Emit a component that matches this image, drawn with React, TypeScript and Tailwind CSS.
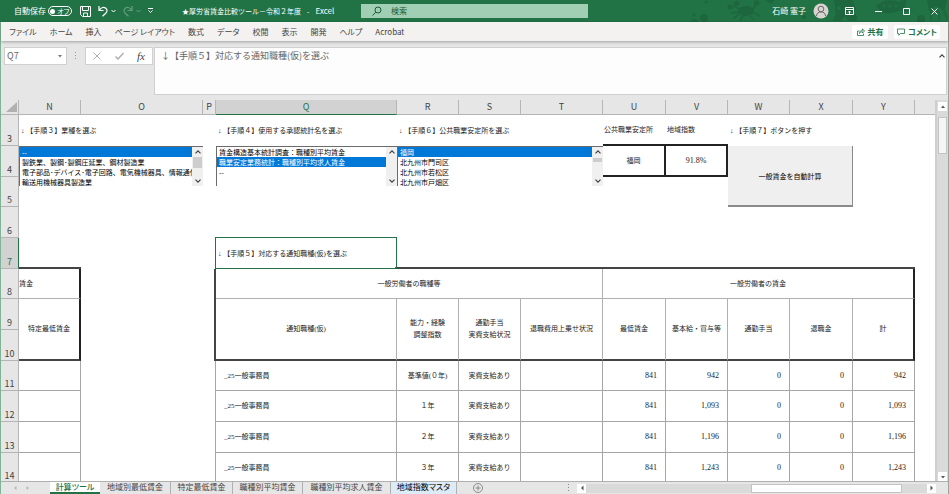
import { ReactNode } from "react";
import clsx from "clsx";

type SheetCellProps = {
  children?: ReactNode;
  className?: string;
  colSpan?: number;
  rowSpan?: number;
};

type ListBoxProps = {
  label: string;
  options: string[];
  selected: string;
  thumb?: string;
};

const columns = [
  { name: "N", width: "w-[62px]" },
  { name: "O", width: "w-[122px]" },
  { name: "P", width: "w-[13px]" },
  { name: "Q", width: "w-[181px]" },
  { name: "R", width: "w-[62px]" },
  { name: "S", width: "w-[62px]" },
  { name: "T", width: "w-[82px]" },
  { name: "U", width: "w-[63px]" },
  { name: "V", width: "w-[62px]" },
  { name: "W", width: "w-[62px]" },
  { name: "X", width: "w-[63px]" },
  { name: "Y", width: "w-[62px]" },
];

const ribbonTabs = [
  "ファイル", "ホーム", "挿入", "ページ レイアウト", "数式", "データ",
  "校閲", "表示", "開発", "ヘルプ", "Acrobat",
];

const sheetTabs = [
  { name: "計算ツール", width: "w-[50px]", active: true },
  { name: "地域別最低賃金", width: "w-[71px]" },
  { name: "特定最低賃金", width: "w-[62px]" },
  { name: "職種別平均賃金", width: "w-[70px]" },
  { name: "職種別平均求人賃金", width: "w-[88px]" },
  { name: "地域指数マスタ", width: "w-[66px]", tinted: true },
];

const wageRows = [
  { row: 11, height: "h-[30px]", years: "基準値(０年)", base: "942", total: "942" },
  { row: 12, height: "h-[31px]", years: "１年", base: "1,093", total: "1,093" },
  { row: 13, height: "h-[31px]", years: "２年", base: "1,196", total: "1,196" },
  { row: 14, height: "h-[30px]", years: "３年", base: "1,243", total: "1,243" },
];

const uiFont = "font-['Noto_Sans_CJK_JP',sans-serif]";
const sheetFont = "font-['Liberation_Serif','Noto_Sans_CJK_JP',serif]";

const Cell: React.FC<SheetCellProps> = ({ children, className, colSpan, rowSpan }) => (
  <td colSpan={colSpan} rowSpan={rowSpan} className={clsx("p-0 whitespace-nowrap", className)}>
    {children}
  </td>
);

const RowHeader = ({ row, active }: { row: number; active?: boolean }) => (
  <th
    scope="row"
    className={clsx(
      "p-0 pb-[2px] align-bottom text-center text-[9px] leading-[9px] font-normal border-r border-b",
      uiFont,
      active
        ? "bg-[#d2d2d2] text-[#217346] border-b-[#b5b5b5] border-r-[#217346]"
        : "bg-[#e6e6e6] text-[#444] border-[#b5b5b5]"
    )}
  >
    {row}
  </th>
);

const Chevron = ({ up }: { up?: boolean }) => (
  <svg viewBox="0 0 8 8" className="size-[8px]" fill="none" stroke="#404040" strokeWidth="1.2">
    <path d={up ? "M1.5 5.3 4 2.8l2.5 2.5" : "M1.5 2.7 4 5.2l2.5-2.5"} />
  </svg>
);

const Triangle = ({ d, fill = "#555" }: { d: string; fill?: string }) => (
  <svg viewBox="0 0 8 8" className="size-[8px]" fill={fill}>
    <path d={d} />
  </svg>
);

const ListBox: React.FC<ListBoxProps> = ({ label, options, selected, thumb }) => (
  <div className={clsx("flex h-[40px] border-t border-l border-[#6b6b6b] bg-white", uiFont)}>
    <select
      size={4}
      aria-label={label}
      defaultValue={selected}
      className="min-w-0 flex-1 h-[39px] overflow-hidden bg-white p-0 text-[7px] text-black outline-none [scrollbar-width:none]"
    >
      {options.map((option) => (
        <option
          key={option}
          className="h-[10px] min-h-0 overflow-hidden p-0 pl-[2px] leading-[10px] checked:bg-[linear-gradient(#0078d7,#0078d7)] checked:[-webkit-text-fill-color:white]"
        >
          {option}
        </option>
      ))}
    </select>
    <div className="flex w-[11px] flex-col items-center justify-between bg-[#f0f0f0] py-px">
      <Chevron up />
      {thumb && <div className={clsx("w-[9px] bg-[#cdcdcd]", thumb)} />}
      <div className="flex-1" />
      <Chevron />
    </div>
  </div>
);

const SeaPattern = () => (
  <svg
    viewBox="0 0 260 22"
    className="pointer-events-none absolute top-0 right-0 h-[22px] w-[260px]"
    fill="#1d663e"
    stroke="#1d663e"
    aria-hidden="true"
  >
    <g stroke="none">
      <circle cx="17" cy="2" r="1.5" />
      <circle cx="5" cy="15" r="1.5" />
      <circle cx="41" cy="7" r="2.5" />
      <circle cx="15" cy="18" r="4" />
      <circle cx="94" cy="8" r="1.5" />
      <circle cx="115" cy="17" r="2" />
      <circle cx="165" cy="17" r="3" />
      <circle cx="232" cy="19" r="4" />
      <ellipse cx="57" cy="11" rx="8" ry="5" />
      <path d="M44 3q5-5 7 1-3 4-7-1zM65 1q6-2 5 4-5 2-5-4z" />
      <path d="M145 0h18l4 9-4 5 5 7h-8l-4-5-5 5h-7l3-8z" />
      <path d="M187 6q10-9 23-4l8-3-2 7 3 6-8-2q-16 8-24-4z" />
      <path d="M238 0h20l-3 10-8-4-7 5z" />
      <path d="M77 0h9l-4 4zM1 22q4-6 9 0z" />
    </g>
    <g fill="none" strokeWidth="1.5">
      <path d="M50 9l-6-4M64 9l3-5M49 12l-7 1M50 14l-6 5M54 16l-3 5M61 16l4 4M65 13l6 3" />
      <path d="M242 8v12M248 8l3 12M254 8l4 11" />
    </g>
    <g fill="#217346" stroke="none">
      <circle cx="150" cy="8" r="2" />
      <circle cx="195" cy="6" r="1.5" />
      <circle cx="201" cy="6" r="1.5" />
      <circle cx="207" cy="6" r="1.5" />
    </g>
  </svg>
);

const TitleBar = () => (
  <header className="relative flex h-[22px] shrink-0 items-center bg-[#217346] text-[7px] leading-[10px] text-white">
    <SeaPattern />
    <div className="flex w-[182px] items-center pl-[14px]">
      <span id="autosave" className="w-[33px] text-[8px]">自動保存</span>
      <button
        role="switch"
        aria-checked="false"
        aria-labelledby="autosave"
        className="ml-px flex h-[10px] w-[24px] items-center gap-[2px] rounded-full border border-white pl-px leading-[8px] whitespace-nowrap [font-feature-settings:'palt']"
      >
        <span className="size-[5px] shrink-0 rounded-full bg-white" />
        オフ
      </button>
      <button aria-label="上書き保存" className="ml-[8px]">
        <svg viewBox="0 0 11 11" className="size-[11px]" fill="none" stroke="white">
          <path d="M.5.5h10v10h-8l-2-2zM2.5.5v4h6v-4M3.5 10.500v-3.500h4v3.500" />
        </svg>
      </button>
      <button aria-label="元に戻す" className="ml-[7px] flex items-center gap-[3px]">
        <svg viewBox="0 0 10 12" className="h-[12px] w-[10px]" fill="none" stroke="white" strokeWidth="1.200">
          <path d="M1 1v4.500h4.500M1.200 5.300C3.500 2 6 1.800 7.800 3.200c2 1.800 1.300 4-.3 5.300L4.500 11.300" />
        </svg>
        <svg viewBox="0 0 5 4" className="h-[4px] w-[5px]" fill="none" stroke="white">
          <path d="M.5 1l2 2 2-2" />
        </svg>
      </button>
      <button aria-label="やり直し" disabled className="ml-[7px] flex items-center gap-[3px] opacity-30">
        <svg viewBox="0 0 10 12" className="h-[12px] w-[10px]" fill="none" stroke="white" strokeWidth="1.200">
          <path d="M9 1v4.500H4.500M8.800 5.300C6.500 2 4 1.800 2.200 3.200c-2 1.800-1.300 4 .3 5.300L5.500 11.300" />
        </svg>
        <svg viewBox="0 0 5 4" className="h-[4px] w-[5px]" fill="none" stroke="white">
          <path d="M.5 1l2 2 2-2" />
        </svg>
      </button>
      <button aria-label="クイック アクセス ツール バーのユーザー設定" className="ml-[7px]">
        <svg viewBox="0 0 5 6" className="h-[6px] w-[5px]" fill="none" stroke="white">
          <path d="M0 .5h5M.5 2.500l2 2 2-2" />
        </svg>
      </button>
    </div>
    <h1 className="flex w-[179px] gap-[6px] whitespace-nowrap">
      <span>★厚労省賃金比較ツール－令和２年度</span>
      <span>-</span>
      <span className="text-[8px]">Excel</span>
    </h1>
    <div className="flex h-[14px] w-[227px] items-center bg-[#a0cfb3] pl-[11px] text-[#185c37]">
      <svg viewBox="0 0 10 10" className="size-[10px]" fill="none" stroke="#185c37">
        <circle cx="6" cy="4" r="3" />
        <path d="M3.800 6.200.5 9.500" />
      </svg>
      <input
        aria-label="検索"
        placeholder="検索"
        className="ml-[9px] min-w-0 flex-1 bg-transparent text-[8px] leading-[10px] outline-none placeholder:text-[#185c37]"
      />
    </div>
    <div className="relative ml-auto flex items-center pr-[11px]">
      <span className="text-[8px]">石崎 憲子</span>
      <svg viewBox="0 0 16 16" className="ml-[7px] size-[16px]" fill="none" stroke="#666">
        <circle cx="8" cy="8" r="7.500" fill="#d8d4d2" stroke="none" />
        <circle cx="8" cy="6" r="2.800" />
        <path d="M3.500 13c0-5.500 9-5.500 9 0" />
      </svg>
      <button aria-label="リボンの表示オプション" className="ml-[16px]">
        <svg viewBox="0 0 9 8" className="h-[8px] w-[9px]" fill="none" stroke="white">
          <path d="M.5.5h8v7h-8zM.5 2.500h8M4.500 7V4M3 5.500l1.500-1.500L6 5.500" />
        </svg>
      </button>
      <button aria-label="最小化" className="ml-[21px]">
        <svg viewBox="0 0 7 7" className="size-[7px]" stroke="white">
          <path d="M0 3.500h7" />
        </svg>
      </button>
      <button aria-label="最大化" className="ml-[21px]">
        <svg viewBox="0 0 7 7" className="size-[7px]" fill="none" stroke="white">
          <path d="M.5.5h6v6h-6z" />
        </svg>
      </button>
      <button aria-label="閉じる" className="ml-[21px]">
        <svg viewBox="0 0 7 7" className="size-[7px]" stroke="white">
          <path d="M.5.5l6 6M6.500.5l-6 6" />
        </svg>
      </button>
    </div>
  </header>
);

const Ribbon = () => (
  <nav className="relative flex h-[19px] shrink-0 items-center bg-[#f3f2f1] pr-[8px] pl-[8px] text-[8px] leading-[12px] text-[#444] shadow-[0_1px_3px_rgba(0,0,0,0.3)]">
    <div className="flex gap-[13px] whitespace-nowrap [font-feature-settings:'palt']">
      {ribbonTabs.map((tab) => (
        <button key={tab}>{tab}</button>
      ))}
    </div>
    <div className="ml-auto flex gap-[6px] font-bold text-[#217346]">
      <button className="flex h-[14px] w-[36px] items-center justify-center gap-[3px] rounded-xs bg-white">
        <svg viewBox="0 0 8 8" className="size-[8px]" fill="none" stroke="#217346" strokeWidth=".8">
          <path d="M2.500 3H.5v4.500h6V5.500M2.500 5.500c0-2 1-3 3-3V.8l2 2.200-2 2V3.800c-1.500 0-2.500.5-3 1.700z" />
        </svg>
        共有
      </button>
      <button className="flex h-[14px] w-[46px] items-center justify-center gap-[3px] rounded-xs bg-white [font-feature-settings:'palt']">
        <svg viewBox="0 0 8 8" className="size-[8px]" fill="none" stroke="#217346" strokeWidth=".8">
          <path d="M.5 1h7v4.500H3.500L1.800 7.300V5.500H.5z" />
        </svg>
        コメント
      </button>
    </div>
  </nav>
);

const FormulaBar = () => (
  <div className="flex shrink-0 items-start pt-[6px] pr-px pb-[5px] pl-[3px]">
    <div className="flex h-[18px] w-[63px] items-center border border-[#d0d0d0] bg-white pr-[2px]">
      <input
        aria-label="名前ボックス"
        defaultValue="Q7"
        className="min-w-0 flex-1 pl-[2px] text-[9px] leading-[12px] text-[#666] outline-none"
      />
      <button aria-label="名前の一覧">
        <Triangle d="M2 3h4L4 5.500z" fill="#777" />
      </button>
    </div>
    <svg viewBox="0 0 2 8" className="mx-[8px] mt-[5px] h-[8px] w-[2px]" fill="#999">
      <path d="M0 0h1v1H0zM0 3h1v1H0zM0 6h1v1H0z" />
    </svg>
    <div className="flex h-[18px] w-[68px] items-center justify-between border border-[#d0d0d0] bg-white px-[7px]">
      <button aria-label="キャンセル">
        <svg viewBox="0 0 8 8" className="size-[8px]" stroke="#b0b0b0">
          <path d="M.5.5l7 7M7.500.5l-7 7" />
        </svg>
      </button>
      <button aria-label="入力">
        <svg viewBox="0 0 9 8" className="h-[8px] w-[9px]" fill="none" stroke="#b0b0b0" strokeWidth="1.500">
          <path d="M.5 4.500l2.500 2.500L8.500 1" />
        </svg>
      </button>
      <button aria-label="関数の挿入" className="font-['Liberation_Serif',serif] text-[11px] leading-[12px] text-[#444] italic">
        fx
      </button>
    </div>
    <div className="ml-px flex h-[48px] flex-1 items-start border border-[#d0d0d0] bg-[#fdfdfd]">
      <textarea
        aria-label="数式バー"
        defaultValue="↓【手順５】対応する通知職種(仮)を選ぶ"
        className="h-[44px] min-w-0 flex-1 resize-none overflow-hidden bg-transparent pt-[2px] pl-[6px] text-[9px] leading-[12px] text-[#666] outline-none"
      />
      <button aria-label="数式バーの折りたたみ" className="mt-[4px]">
        <Chevron up />
      </button>
    </div>
  </div>
);

const Sheet = () => (
  <table className={clsx("w-full table-fixed border-separate border-spacing-0 bg-white text-[7px] leading-[12px] text-[#222]", sheetFont)}>
    <colgroup>
      <col className="w-[18px]" />
      {columns.map(({ name, width }) => (
        <col key={name} className={width} />
      ))}
      <col />
    </colgroup>
    <thead className={uiFont}>
      <tr className="h-[15px] bg-[#e6e6e6] text-[9px] leading-[12px] text-[#444]">
        <td className="border-r border-b border-[#b5b5b5] p-0">
          <svg viewBox="0 0 17 14" className="block h-[14px] w-[17px]" fill="#b0b0b0">
            <path d="M16 2v10H5z" />
          </svg>
        </td>
        {columns.map(({ name }) => (
          <th
            key={name}
            scope="col"
            className={clsx(
              "border-r border-b p-0 text-center font-normal",
              name === "Q"
                ? "bg-[#d2d2d2] text-[#217346] border-r-[#b5b5b5] border-b-[#217346]"
                : "border-[#b5b5b5]"
            )}
          >
            {name}
          </th>
        ))}
        <td className="border-b border-[#b5b5b5] p-0" />
      </tr>
    </thead>
    <tbody>
      <tr className="h-[31px]">
        <RowHeader row={3} />
        <Cell colSpan={2} className="pl-[2px]">↓ 【手順３】業種を選ぶ</Cell>
        <Cell />
        <Cell className="pl-[2px]">↓ 【手順４】使用する承認統計名を選ぶ</Cell>
        <Cell colSpan={3} className="pl-[2px]">↓ 【手順６】公共職業安定所を選ぶ</Cell>
        <Cell className="border-b-2 border-[#222] pl-px">公共職業安定所</Cell>
        <Cell className="border-b-2 border-[#222] pl-px">地域指数</Cell>
        <Cell colSpan={2} className="pl-[2px]">↓ 【手順７】ボタンを押す</Cell>
        <Cell />
        <Cell />
      </tr>
      <tr className="h-[31px]">
        <RowHeader row={4} />
        <Cell colSpan={2} rowSpan={2} className="align-top">
          <ListBox
            label="業種"
            selected="--"
            thumb="h-[11px] mt-px"
            options={[
              "--",
              "製鉄業、製鋼･製鋼圧延業、鋼材製造業",
              "電子部品･デバイス･電子回路、電気機械器具、情報通信",
              "輸送用機械器具製造業",
            ]}
          />
        </Cell>
        <Cell rowSpan={2} />
        <Cell rowSpan={2} className="align-top">
          <ListBox
            label="承認統計名"
            selected="職業安定業務統計：職種別平均求人賃金"
            options={[
              "賃金構造基本統計調査：職種別平均賃金",
              "職業安定業務統計：職種別平均求人賃金",
              "--",
            ]}
          />
        </Cell>
        <Cell colSpan={3} rowSpan={2} className="align-top">
          <ListBox
            label="公共職業安定所"
            selected="福岡"
            thumb="h-[4px] mt-[2px]"
            options={["福岡", "北九州市門司区", "北九州市若松区", "北九州市戸畑区"]}
          />
        </Cell>
        <Cell className="border-r-2 border-b-2 border-[#222] text-center">福岡</Cell>
        <Cell className="border-r-2 border-b-2 border-[#222] text-center text-[8px]">91.8%</Cell>
        <Cell colSpan={2} rowSpan={2} className="align-top">
          <button className={clsx("block h-[61px] w-full border-r border-b-2 border-[#8a8a8a] bg-[#efefef] text-[7px] text-black", uiFont)}>
            一般賃金を自動計算
          </button>
        </Cell>
        <Cell rowSpan={2} />
        <Cell rowSpan={2} />
      </tr>
      <tr className="h-[30px]">
        <RowHeader row={5} />
        <Cell colSpan={2} />
      </tr>
      <tr className="h-[31px]">
        <RowHeader row={6} />
        <Cell colSpan={13} />
      </tr>
      <tr className="h-[31px]">
        <RowHeader row={7} active />
        <Cell className="border-b-2 border-[#444]" />
        <Cell colSpan={2} />
        <Cell className="relative pl-[2px]">
          ↓ 【手順５】対応する通知職種(仮)を選ぶ
          <span className="pointer-events-none absolute -top-px right-0 bottom-0 -left-px border border-[#217346]" />
          <span className="pointer-events-none absolute right-0 bottom-0 size-[2px] bg-[#217346]" />
        </Cell>
        <Cell colSpan={8} className="border-b-2 border-[#444]" />
        <Cell />
      </tr>
      <tr className="h-[30px]">
        <RowHeader row={8} />
        <Cell className="border-r-2 border-b border-r-[#222] border-b-[#b0b0b0]">賃金</Cell>
        <Cell />
        <Cell className="border-r-2 border-[#444]" />
        <Cell colSpan={4} className="border-r border-b border-[#b0b0b0] text-center">
          一般労働者の職種等
        </Cell>
        <Cell colSpan={5} className="border-r-2 border-b border-r-[#222] border-b-[#b0b0b0] text-center">
          一般労働者の賃金
        </Cell>
        <Cell />
      </tr>
      <tr className="h-[31px] text-center">
        <RowHeader row={9} />
        <Cell rowSpan={2} className="border-r-2 border-b-2 border-r-[#222] border-b-[#444]">特定最低賃金</Cell>
        <Cell rowSpan={2} />
        <Cell rowSpan={2} className="border-r-2 border-[#444]" />
        <Cell rowSpan={2} className="border-r border-b-2 border-r-[#b0b0b0] border-b-[#444]">通知職種(仮)</Cell>
        <Cell rowSpan={2} className="border-r border-b-2 border-r-[#b0b0b0] border-b-[#444]">能力・経験<br />調整指数</Cell>
        <Cell rowSpan={2} className="border-r border-b-2 border-r-[#b0b0b0] border-b-[#444]">通勤手当<br />実費支給状況</Cell>
        <Cell rowSpan={2} className="border-r border-b-2 border-r-[#b0b0b0] border-b-[#444]">退職費用上乗せ状況</Cell>
        <Cell rowSpan={2} className="border-r border-b-2 border-r-[#b0b0b0] border-b-[#444]">最低賃金</Cell>
        <Cell rowSpan={2} className="border-r border-b-2 border-r-[#b0b0b0] border-b-[#444]">基本給・賞与等</Cell>
        <Cell rowSpan={2} className="border-r border-b-2 border-r-[#b0b0b0] border-b-[#444]">通勤手当</Cell>
        <Cell rowSpan={2} className="border-r border-b-2 border-r-[#b0b0b0] border-b-[#444]">退職金</Cell>
        <Cell rowSpan={2} className="border-r-2 border-b-2 border-r-[#222] border-b-[#444]">計</Cell>
        <Cell rowSpan={2} />
      </tr>
      <tr className="h-[31px]">
        <RowHeader row={10} />
      </tr>
      {wageRows.map(({ row, height, years, base, total }) => (
        <tr key={row} className={height}>
          <RowHeader row={row} />
          <Cell className="border-r border-b border-[#a6a6a6]" />
          <Cell />
          <Cell className="border-r border-[#a6a6a6]" />
          <Cell className="border-r border-b border-[#a6a6a6] pl-[8px]">_25一般事務員</Cell>
          <Cell className="border-r border-b border-[#a6a6a6] text-center">{years}</Cell>
          <Cell className="border-r border-b border-[#a6a6a6] text-center">実費支給あり</Cell>
          <Cell className="border-r border-b border-[#a6a6a6]" />
          {["841", base, "0", "0", total].map((value, index) => (
            <Cell key={index} className="border-r border-b border-[#a6a6a6] pr-[8px] text-right text-[8px]">
              {value}
            </Cell>
          ))}
          <Cell />
        </tr>
      ))}
    </tbody>
  </table>
);

const VerticalScrollbar = () => (
  <div className="flex w-[13px] shrink-0 flex-col items-center border-l-2 border-[#cfcfcf] bg-[#dadada] pt-[2px]">
    <button aria-label="上へスクロール" className="flex h-[9px] w-[9px] items-center justify-center bg-white">
      <Triangle d="M2 5h4L4 2.500z" />
    </button>
    <div className="mt-[6px] h-[37px] w-[9px] border border-[#c3c3c3] bg-[#f5f5f5]" />
    <div className="flex-1" />
    <button aria-label="下へスクロール" className="flex h-[9px] w-[9px] items-center justify-center bg-white">
      <Triangle d="M2 3h4L4 5.500z" />
    </button>
  </div>
);

const SheetTabs = () => (
  <footer className="flex h-[13px] shrink-0 border-t border-[#b0b0b0] bg-[#e6e6e6] text-[8px] leading-[11px] text-[#444]">
    <div className="flex w-[49px] items-center gap-[5px] pl-[10px]">
      <button aria-label="前のシート"><Triangle d="M5.500 2v4L3 4z" fill="#b5b5b5" /></button>
      <button aria-label="次のシート"><Triangle d="M2.500 2v4L5 4z" fill="#b5b5b5" /></button>
    </div>
    {sheetTabs.map(({ name, width, active, tinted }) => (
      <button
        key={name}
        className={clsx(
          "flex items-start justify-center whitespace-nowrap leading-[10px] [font-feature-settings:'palt']",
          width,
          active && "border-b-2 border-[#217346] bg-white font-medium text-[#217346]",
          tinted && "bg-[#ddebf7] text-black",
          !active && "border-r border-[#b0b0b0]"
        )}
      >
        {name}
      </button>
    ))}
    <button aria-label="新しいシート" className="ml-[16px] flex items-center">
      <svg viewBox="0 0 10 10" className="size-[10px]" fill="none" stroke="#777" strokeWidth=".8">
        <circle cx="5" cy="5" r="4.500" />
        <path d="M5 2.500v5M2.500 5h5" />
      </svg>
    </button>
    <div className="ml-auto flex w-[368px] items-center">
      <svg viewBox="0 0 2 8" className="h-[8px] w-[2px]" fill="#888">
        <path d="M0 0h1v1H0zM0 3h1v1H0zM0 6h1v1H0z" />
      </svg>
      <button aria-label="左へスクロール" className="ml-[7px] flex h-[9px] w-[9px] items-center justify-center bg-white">
        <Triangle d="M5.500 1.500v5L3 4z" />
      </button>
      <div className="flex h-[9px] flex-1 justify-end bg-[#dadada] pr-[25px]">
        <div className="w-[151px] border border-[#c3c3c3] bg-white" />
      </div>
      <button aria-label="右へスクロール" className="flex h-[9px] w-[9px] items-center justify-center bg-white">
        <Triangle d="M2.500 1.500v5L5 4z" />
      </button>
    </div>
    <div className="w-[12px]" />
  </footer>
);

const App = () => (
  <div className={clsx("flex h-screen flex-col overflow-hidden bg-[#e6e6e6]", uiFont)}>
    <TitleBar />
    <div className="flex min-h-0 flex-1 flex-col border-x border-[#7fb497]">
      <Ribbon />
      <FormulaBar />
      <div className="flex min-h-0 flex-1">
        <main className="min-w-0 flex-1 overflow-hidden bg-white">
          <Sheet />
        </main>
        <VerticalScrollbar />
      </div>
      <SheetTabs />
    </div>
  </div>
);

export default App;
